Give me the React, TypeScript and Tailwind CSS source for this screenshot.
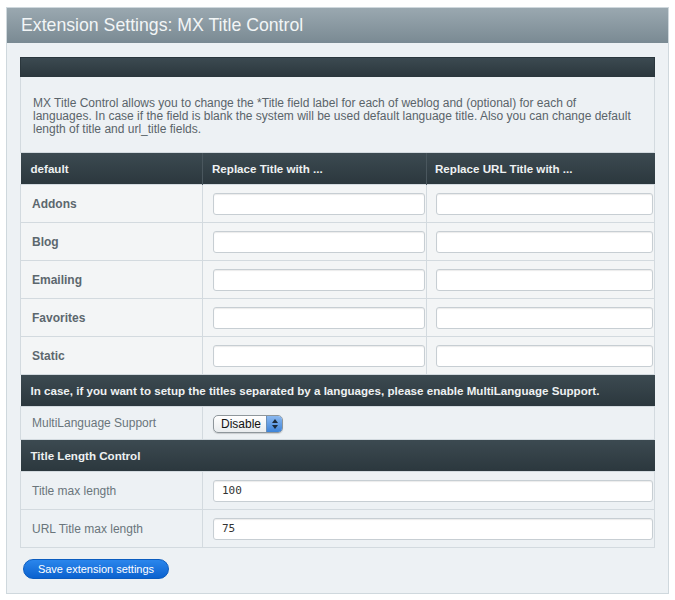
import React from 'react';

const sections = ['Addons', 'Blog', 'Emailing', 'Favorites', 'Static'];

const darkRow = "bg-gradient-to-b from-[#3c4a51] to-[#2b373d] text-[#eef1f2] font-bold text-[11.6px]";
const inputCls = "block w-full h-[22px] rounded-[3px] border border-[#c7ced3] bg-white shadow-[inset_0_1px_1px_rgba(0,0,0,0.08)]";

const App: React.FC = () => {
  return (
    <div className="min-h-[600px] bg-white pt-[7px] pl-[6px] pr-[6px] font-['Liberation_Sans',Arial,sans-serif]">
      <div className="w-[663px] border border-[#cfd8dd] bg-[#edf1f4] pb-[13px]">
        {/* Header */}
        <div className="h-[35px] bg-gradient-to-b from-[#9aa8b0] to-[#7a8a93] pl-[14px] flex items-center">
          <h1 className="text-[17.7px] text-[#f2f5f6] leading-none">Extension Settings: MX Title Control</h1>
        </div>

        <div className="pt-[14px] pl-[13px] pr-[14px]">
          <table className="w-[634px] border-collapse table-fixed text-left">
            <colgroup>
              <col className="w-[182px]" />
              <col className="w-[224px]" />
              <col className="w-[228px]" />
            </colgroup>
            <tbody>
              <tr className={darkRow}>
                <td colSpan={3} className="h-[19px] border border-[#2b373d]"></td>
              </tr>
              <tr>
                <td colSpan={3} className="border border-[#d3dadf] pl-[12px] pr-[20px] pt-[20px] pb-[16px] text-[12px] leading-[13px] text-[#5a646a]">
                  MX Title Control allows you to change the *Title field label for each of weblog and (optional) for each of languages. In case if the field is blank the system will be used default language title. Also you can change default length of title and url_title fields.
                </td>
              </tr>
              <tr className={darkRow}>
                <td className="h-[32px] pl-[10px] border-r border-[#4a575e]">default</td>
                <td className="pl-[9px] border-r border-[#4a575e]">Replace Title with ...</td>
                <td className="pl-[8px]">Replace URL Title with ...</td>
              </tr>
              {sections.map((s) => (
                <tr key={s} className="bg-[#f3f5f6]">
                  <td className="h-[38px] pl-[11px] border border-[#d3dadf] text-[12px] font-bold text-[#5c676e]">{s}</td>
                  <td className="pl-[10px] pr-[1px] border border-[#d3dadf]">
                    <input className={inputCls} />
                  </td>
                  <td className="pl-[9px] pr-[1px] border border-[#d3dadf]">
                    <input className={inputCls} />
                  </td>
                </tr>
              ))}
              <tr className={darkRow}>
                <td colSpan={3} className="h-[32px] pl-[10px]">
                  In case, if you want to setup the titles separated by a languages, please enable MultiLanguage Support.
                </td>
              </tr>
              <tr>
                <td className="h-[33px] pl-[11px] border border-[#d3dadf] text-[12px] text-[#6a757b]">MultiLanguage Support</td>
                <td colSpan={2} className="pl-[10px] border border-[#d3dadf]">
                  <div className="inline-flex h-[18px] items-stretch rounded-[5px] border border-[#8e969b] bg-gradient-to-b from-white to-[#e9ecee] shadow-[0_1px_1px_rgba(0,0,0,0.15)] overflow-hidden">
                    <span className="pl-[7px] pr-[5px] text-[12px] leading-[16px] text-[#111]">Disable</span>
                    <span className="w-[16px] flex flex-col items-center justify-center gap-[2px] bg-gradient-to-b from-[#8ab8ef] to-[#3c83d8] border-l border-[#6b8fb8]">
                      <svg width="6" height="4" viewBox="0 0 6 4"><path d="M3 0L6 4H0z" fill="#1b2a3a" /></svg>
                      <svg width="6" height="4" viewBox="0 0 6 4"><path d="M0 0h6L3 4z" fill="#1b2a3a" /></svg>
                    </span>
                  </div>
                </td>
              </tr>
              <tr className={darkRow}>
                <td colSpan={3} className="h-[32px] pl-[10px]">Title Length Control</td>
              </tr>
              {[
                ['Title max length', '100'],
                ['URL Title max length', '75'],
              ].map(([label, val]) => (
                <tr key={label}>
                  <td className="h-[38px] pl-[11px] border border-[#d3dadf] text-[12px] text-[#6a757b]">{label}</td>
                  <td colSpan={2} className="pl-[10px] pr-[1px] border border-[#d3dadf]">
                    <input
                      defaultValue={val}
                      className={`${inputCls} pl-[8px] text-[11px] text-[#333] font-['DejaVu_Sans_Mono',monospace]`}
                    />
                  </td>
                </tr>
              ))}
            </tbody>
          </table>

          <button className="mt-[11px] ml-[3px] h-[20px] w-[146px] rounded-full bg-gradient-to-b from-[#2a86ec] to-[#0a62cf] border border-[#0b5cbf] text-white text-[11px] leading-none">
            Save extension settings
          </button>
        </div>
      </div>
    </div>
  );
};

export default App;
